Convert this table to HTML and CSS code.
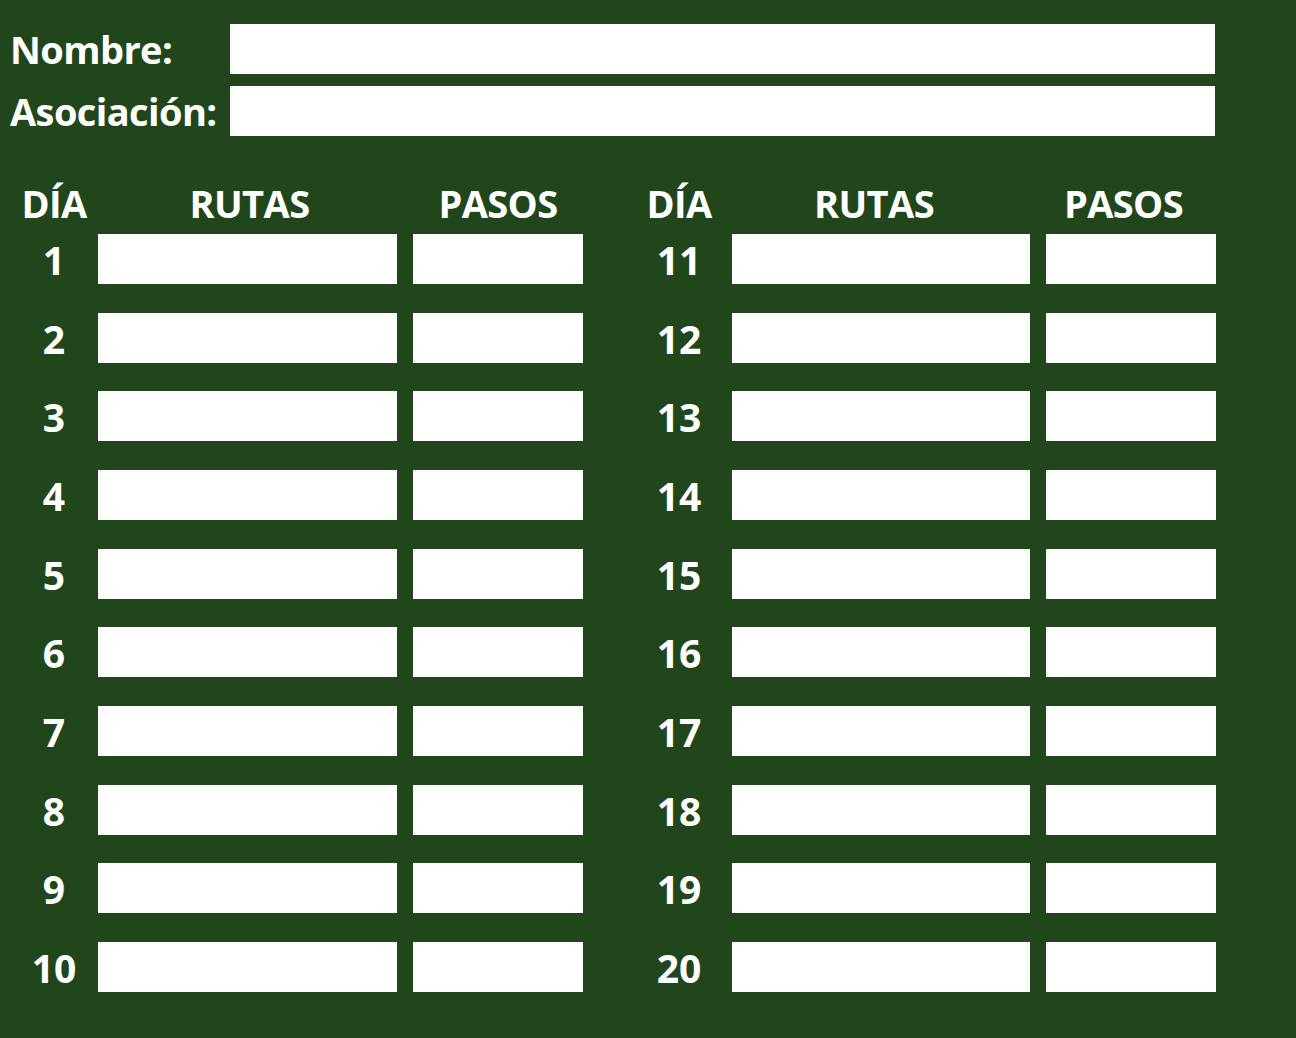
FILE: index.html
```html
<!DOCTYPE html>
<html lang="es">
<head>
<meta charset="utf-8">
<title>Registro de rutas</title>
<link rel="stylesheet" href="styles.css">
</head>
<body>
<main class="sheet">
  <section class="ident">
    <span class="label">Nombre:</span><div class="box"></div>
    <span class="label">Asociación:</span><div class="box"></div>
  </section>
  <section class="log">
    <div class="panel panel-left">
      <div class="heads">
        <div class="head">DÍA</div><div class="head head-rutas">RUTAS</div><div class="head head-pasos">PASOS</div>
      </div>
      <div class="rows">
        <div class="num">1</div><div class="box"></div><div class="box box-pasos"></div>
        <div class="num">2</div><div class="box"></div><div class="box box-pasos"></div>
        <div class="num">3</div><div class="box"></div><div class="box box-pasos"></div>
        <div class="num">4</div><div class="box"></div><div class="box box-pasos"></div>
        <div class="num">5</div><div class="box"></div><div class="box box-pasos"></div>
        <div class="num">6</div><div class="box"></div><div class="box box-pasos"></div>
        <div class="num">7</div><div class="box"></div><div class="box box-pasos"></div>
        <div class="num">8</div><div class="box"></div><div class="box box-pasos"></div>
        <div class="num">9</div><div class="box"></div><div class="box box-pasos"></div>
        <div class="num">10</div><div class="box"></div><div class="box box-pasos"></div>
      </div>
    </div>
    <div class="panel panel-right">
      <div class="heads">
        <div class="head">DÍA</div><div class="head head-rutas">RUTAS</div><div class="head head-pasos">PASOS</div>
      </div>
      <div class="rows">
        <div class="num">11</div><div class="box"></div><div class="box box-pasos"></div>
        <div class="num">12</div><div class="box"></div><div class="box box-pasos"></div>
        <div class="num">13</div><div class="box"></div><div class="box box-pasos"></div>
        <div class="num">14</div><div class="box"></div><div class="box box-pasos"></div>
        <div class="num">15</div><div class="box"></div><div class="box box-pasos"></div>
        <div class="num">16</div><div class="box"></div><div class="box box-pasos"></div>
        <div class="num">17</div><div class="box"></div><div class="box box-pasos"></div>
        <div class="num">18</div><div class="box"></div><div class="box box-pasos"></div>
        <div class="num">19</div><div class="box"></div><div class="box box-pasos"></div>
        <div class="num">20</div><div class="box"></div><div class="box box-pasos"></div>
      </div>
    </div>
  </section>
</main>
</body>
</html>
```
FILE: styles.css
```css
html, body {
  margin: 0;
  padding: 0;
  background: #22461c;
}
body {
  width: 1296px;
  height: 1038px;
  overflow: hidden;
  font-family: "Open Sans", "Noto Sans", sans-serif;
  font-weight: 700;
  color: #ffffff;
}
.sheet {
  padding: 24px 0 0 10px;
}
.box {
  background: #ffffff;
  height: 50px;
}
.ident {
  display: grid;
  grid-template-columns: 220px 985px;
  row-gap: 12px;
}
.label {
  font-size: 38px;
  line-height: 50px;
  letter-spacing: -0.6px;
}
.log {
  display: flex;
  margin-top: 48px;
  gap: 43px;
}
.panel {
  display: flex;
  flex-direction: column;
}
.heads,
.rows {
  display: grid;
}
.panel-left .heads,
.panel-left .rows {
  grid-template-columns: 88px 299px 186px;
}
.panel-right .heads,
.panel-right .rows {
  grid-template-columns: 106px 298px 186px;
}
.heads {
  height: 39px;
  margin-bottom: 11px;
}
.rows {
  grid-template-rows: repeat(10, 50px);
  row-gap: 28.67px;
}
.box-pasos {
  margin-left: 16px;
}
.head {
  font-size: 38px;
  line-height: 39px;
  text-align: center;
  letter-spacing: -0.6px;
}
.head-pasos {
  padding-left: 16px;
}
.panel-left .head-rutas {
  padding-left: 4px;
}
.panel-right .head-rutas {
  padding-right: 14px;
}
.panel-right .head-pasos {
  padding-right: 15px;
}
.num {
  font-size: 39px;
  line-height: 52px;
  text-align: center;
  letter-spacing: 0;
}
```
